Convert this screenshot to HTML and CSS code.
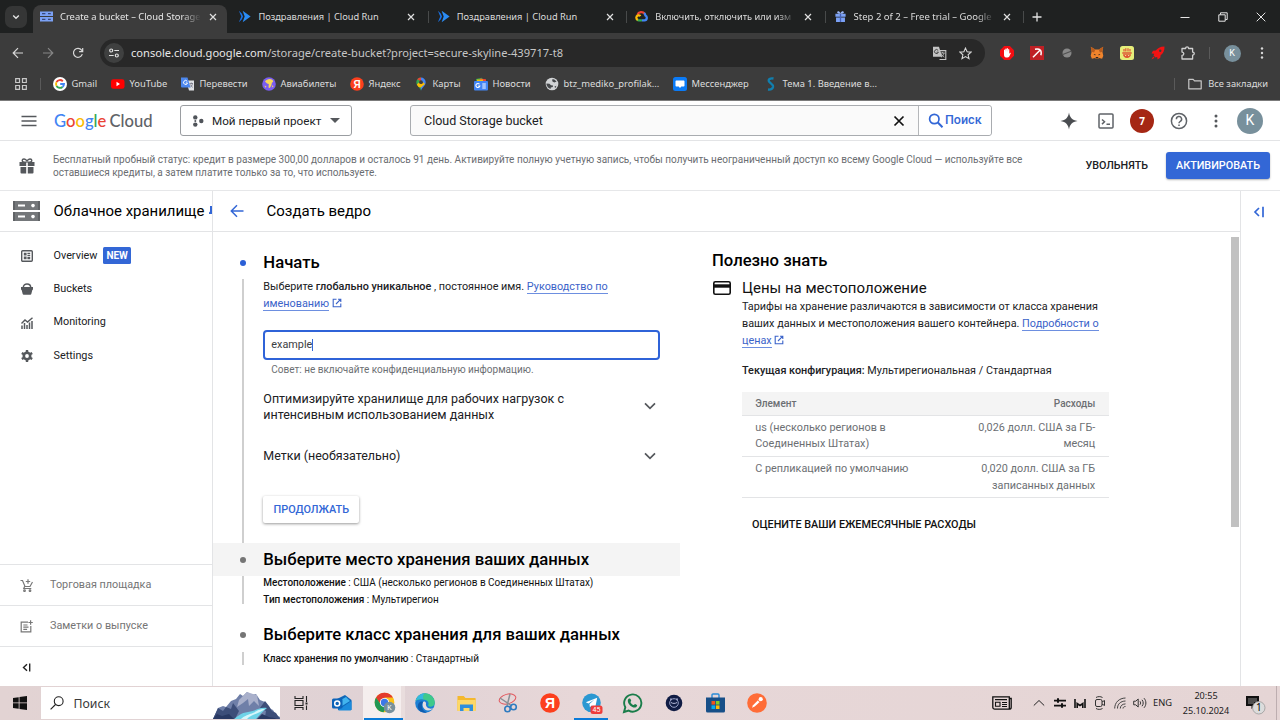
FILE: index.html
```html
<!DOCTYPE html>
<html lang="ru">
<head>
<meta charset="utf-8">
<title>Create a bucket – Cloud Storage</title>
<link rel="stylesheet" href="styles.css">
</head>
<body>
<header class="browser">
  <div class="tabstrip">
    <div class="tab-search"><svg width="8" height="8" viewBox="0 0 8 8"><path d="M1.2 2.4 4 5.2l2.8-2.8" fill="none" stroke="#e3e3e3" stroke-width="1.4"/></svg></div>
    <div class="tabs">
      <div class="tab active">
        <svg class="fav" viewBox="0 0 14 14"><path d="M0 1.6h14v4.8H0zM0 7.6h14v4.8H0z" fill="#7ba1f5"/><path d="M2.2 3.2h3.6v1.5H2.2zM8.6 3.2h3v1.5h-3zM2.2 9.3h3.6v1.5H2.2zM8.6 9.3h3v1.5h-3z" fill="#38477a"/></svg>
        <span class="tab-title fade">Create a bucket – Cloud Storage</span><span class="close"><svg viewBox="0 0 8 8"><path d="m1 1 6 6M7 1 1 7"/></svg></span>
      </div>
      <div class="tab sep">
        <svg class="fav" viewBox="0 0 14 14"><path d="m1 .8 2.5 6.2L1 13.2 4.2 10l1.2-3-1.2-3z" fill="#1a73e8"/><path d="m5 .8 8.6 6.2L5 13.2 7.2 7z" fill="#2b8cf5"/></svg>
        <span class="tab-title">Поздравления | Cloud Run</span><span class="close"><svg viewBox="0 0 8 8"><path d="m1 1 6 6M7 1 1 7"/></svg></span>
      </div>
      <div class="tab sep">
        <svg class="fav" viewBox="0 0 14 14"><path d="m1 .8 2.5 6.2L1 13.2 4.2 10l1.2-3-1.2-3z" fill="#1a73e8"/><path d="m5 .8 8.6 6.2L5 13.2 7.2 7z" fill="#2b8cf5"/></svg>
        <span class="tab-title">Поздравления | Cloud Run</span><span class="close"><svg viewBox="0 0 8 8"><path d="m1 1 6 6M7 1 1 7"/></svg></span>
      </div>
      <div class="tab sep">
        <svg class="fav" viewBox="0 0 14 14" fill="none" stroke-width="2.4"><path d="M2.6 5.2A4.6 4.6 0 0 1 10.4 4" stroke="#ea4335"/><path d="M9.800 3.400c1 .7 1.300 1.600 1.400 2.600 2.300 1 2 4.900-1 5.200H7.500" stroke="#4285f4"/><path d="M7.500 11.200H4.200c-.8 0-1.400-.2-1.900-.7" stroke="#34a853"/><path d="M3 10.800C.8 9.400.8 6.500 3.300 5.800c1-.2 2 .1 2.600.8" stroke="#fbbc05"/></svg>
        <span class="tab-title fade">Включить, отключить или изм</span><span class="close"><svg viewBox="0 0 8 8"><path d="m1 1 6 6M7 1 1 7"/></svg></span>
      </div>
      <div class="tab sep">
        <svg class="fav" viewBox="0 0 14 14"><path d="M1.500 4h11v3.200h-11zM2.200 8h9.600v5H2.200z" fill="#7ba1f5"/><path d="M7 4C4 4.500 3 3.200 3.500 2S6 1 7 3.500C8 1 10 1 10.500 2S10 4.500 7 4z" fill="#9db8f8"/><path d="M6.300 4h1.400v9H6.300z" fill="#4560b8"/></svg>
        <span class="tab-title fade">Step 2 of 2 – Free trial – Google</span><span class="close"><svg viewBox="0 0 8 8"><path d="m1 1 6 6M7 1 1 7"/></svg></span>
      </div>
    </div>
    <svg class="newtab" width="10" height="10" viewBox="0 0 10 10"><path d="M5 .5v9M.5 5h9" stroke="#e3e3e3" stroke-width="1.300"/></svg>
    <div class="winbtns">
      <svg viewBox="0 0 10 10"><path d="M.5 5.500h9"/></svg>
      <svg viewBox="0 0 10 10"><path d="M.8 2.800h6.400v6.400H.8zM2.500 2.600V.8h6.700v6.700H7.400"/></svg>
      <svg viewBox="0 0 10 10"><path d="m.7.7 8.600 8.600M9.300.7.7 9.300"/></svg>
    </div>
  </div>

  <div class="toolbar">
    <div class="nav">
      <svg width="12" height="12" viewBox="0 0 12 12"><path d="M11 6H1.500M6 1.200 1.200 6 6 10.800" fill="none" stroke="#d8d8d8" stroke-width="1.200"/></svg>
      <svg width="12" height="12" viewBox="0 0 12 12"><path d="M1 6h9.500M6 1.200 10.800 6 6 10.800" fill="none" stroke="#868686" stroke-width="1.200"/></svg>
      <svg width="12" height="12" viewBox="0 0 12 12"><path d="M10.300 7.200A4.500 4.500 0 1 1 9.600 3.200L10.500 4.500M10.700 1v3.600H7.100" fill="none" stroke="#d8d8d8" stroke-width="1.200"/></svg>
    </div>
    <div class="omnibox">
      <span class="site"><svg width="12" height="12" viewBox="0 0 12 12" fill="none" stroke="#e0e0e0" stroke-width="1.200"><circle cx="3.200" cy="3.500" r="1.500"/><path d="M6.300 3.500H11M1 8.500h4.700"/><circle cx="8.800" cy="8.500" r="1.500"/></svg></span>
      <span class="url"><b>console.cloud.google.com</b>/storage/create-bucket?project=secure-skyline-439717-t8</span>
      <svg class="translate" width="15" height="15" viewBox="0 0 15 15"><path d="M1 .8h6l3.200 10H1z" fill="#c4c4c4"/><path d="M6.200 4.600h7.600v8.900H7.500" fill="none" stroke="#c4c4c4" stroke-width="1.100"/><path d="M6.200 4.500a2 2 0 1 0 .2 1.700H4.600" fill="none" stroke="#3a3a3a" stroke-width=".9"/><path d="M8.500 7h4.300M10.600 6v1M12 7c-.3 2-1.700 3.400-3 4.200M9.300 8c.6 1.500 1.700 2.600 3 3.200" fill="none" stroke="#c4c4c4" stroke-width=".8"/></svg>
      <svg width="13" height="13" viewBox="0 0 13 13"><path d="m6.500 1.100 1.600 3.700 4 .3-3 2.700.9 3.900-3.500-2.100L3 11.700l.9-3.900-3-2.700 4-.3z" fill="none" stroke="#d8d8d8" stroke-width="1.100"/></svg>
    </div>
    <div class="ext">
      <span><svg width="14" height="14" viewBox="0 0 14 14"><path d="M4.200 0h5.600L14 4.200v5.600L9.800 14H4.200L0 9.800V4.200z" fill="#f40d12"/><path d="M4 7.500V4.200c0-.8 1-.8 1.100 0V6l.2-3c.1-.8 1.100-.8 1.200 0v2.800l.2-3.300c.1-.7 1.100-.7 1.200 0V6l.3-2.400c.1-.7 1.100-.6 1.100.1v4l.6-.8c.6-.5 1.100 0 .8.500L9.300 10.500C8.500 12 4 12.300 4 9z" fill="#fff"/></svg></span>
      <span><svg width="14" height="14" viewBox="0 0 14 14"><path d="M0 0h14v14H0z" fill="#bf2025"/><path d="M3 11.200 10.200 4M5 3.200c2.500-.5 5 .5 5.500 1s1.100 3 .3 5" fill="none" stroke="#fff" stroke-width="1.500"/></svg></span>
      <span><svg width="10" height="10" viewBox="0 0 10 10"><circle cx="5" cy="5" r="4.500" fill="#888"/><path d="m.8 6.500 8.300-3.300" stroke="#505050" stroke-width="1.200"/></svg></span>
      <span><svg width="14" height="14" viewBox="0 0 14 14"><path d="m.8.8 4.400 2.600h3.600L13.200.8l-.8 5 .9 4-1.200 3-3.100-.9-1.300 1.100H6.300L5 11.900l-3.100.9-1.200-3 .9-4z" fill="#f0842c"/><path d="m.8.8 4.400 2.600-1 3-2.600-.6zM13.200.8 8.800 3.400l1 3 2.600-.6z" fill="#b85c1e"/><path d="m3.500 8 2 .3-.3 1.200zM10.500 8l-2 .3.300 1.200zM5.600 11h2.800l-.5 1.500H6.100z" fill="#2b2522"/></svg></span>
      <span><svg width="14" height="14" viewBox="0 0 14 14"><rect width="14" height="14" rx="2.500" fill="#e6ee7a"/><path d="M2.300 6.200h9.400v1.500H2.300zM3 8.300h8c0 2-1.500 3.700-4 3.700s-4-1.700-4-3.700z" fill="#df5634"/><path d="M4 5.500V3M5.800 5.500V2.200M8 5.500V2.200M10 5.500V3" stroke="#df5634" stroke-width="1.200"/><path d="M5 9.500h1.200M8 9.500h1.200" stroke="#f4d29a"/></svg></span>
      <span><svg width="14" height="14" viewBox="0 0 14 14"><path d="M13.500.4C9 .5 6.500 2 4.800 4.400L2 4.700.5 7.500l2.700.3-.7 1.700 2 2 1.700-.6.400 2.600 2.700-1.700.3-2.600c2.600-1.800 4-4.500 3.900-8.800z" fill="#f31212"/><circle cx="9.200" cy="4.800" r="1.200" fill="#3c3c3c"/><path d="M2.200 10.500.5 13.500l3-1.700z" fill="#f31212"/></svg></span>
      <span><svg width="14" height="14" viewBox="0 0 14 14"><path d="M1 2.500h3.600c0-2.300 3-2.300 3 0h4v3.600c2.200 0 2.200 3 0 3V13H1V9.300c2.400 0 2.400-3.200 0-3.200z" fill="none" stroke="#d0d0d0" stroke-width="1.300" stroke-linejoin="round"/></svg></span>
    </div>
    <i class="tsep"></i>
    <span class="avatar small">K</span>
    <svg class="kebab" width="4" height="14" viewBox="0 0 4 14" fill="#d8d8d8"><circle cx="2" cy="2.500" r="1.200"/><circle cx="2" cy="7" r="1.200"/><circle cx="2" cy="11.500" r="1.200"/></svg>
  </div>

  <div class="bookmarks">
    <svg class="apps" width="12" height="12" viewBox="0 0 12 12" fill="none" stroke="#c8c8c8" stroke-width="1.200"><path d="M.7.7h3.800v3.800H.7zM7.500.7h3.800v3.800H7.500zM.7 7.500h3.800v3.800H.7zM7.500 7.500h3.800v3.800H7.500z"/></svg>
    <i class="tsep"></i>
    <div class="bm w58"><svg viewBox="0 0 14 14"><circle cx="7" cy="7" r="7" fill="#fff"/><g fill="none" stroke-width="1.900"><path d="M9.800 4.200A4 4 0 0 0 3.500 5.100" stroke="#ea4335"/><path d="M3.500 5.100a4 4 0 0 0 0 3.800" stroke="#fbbc05"/><path d="M3.500 8.900a4 4 0 0 0 6 1" stroke="#34a853"/><path d="M9.500 9.900A3.800 3.800 0 0 0 11 7H7.200" stroke="#4285f4"/></g></svg>Gmail</div>
    <div class="bm w70"><svg viewBox="0 0 14 14"><rect y="2.200" width="13.500" height="9.600" rx="2.300" fill="#f00"/><path d="M5.500 4.800v4.400L9 7z" fill="#fff"/></svg>YouTube</div>
    <div class="bm w81"><svg viewBox="0 0 14 14"><path d="M5 3.500h8v10H8z" fill="#dfe1e5"/><path d="M0 .5h6.500l3 10H1a1 1 0 0 1-1-1z" fill="#4c87ee"/><path d="M6.200 4.300a2 2 0 1 0 .3 1.700H4.800" fill="none" stroke="#fff"/><path d="M8.500 6.500H12M10.300 5.500v1M11.500 6.500c-.2 1.800-1.300 3-2.200 3.800M9.500 7.500c.5 1.400 1.200 2.200 2.300 2.900" fill="none" stroke="#667" stroke-width=".7"/></svg>Перевести</div>
    <div class="bm w88"><svg viewBox="0 0 14 14"><circle cx="7" cy="7" r="6.800" fill="#7a5df0"/><path d="M3 4.500c1.500-2.300 5-3.300 7.500-1.500 1.300 1.500.5 2.500-.5 2.500l-.7 3-1.500 2.500-1.300-.5L6.800 7 5 6.500z" fill="#f7d75a"/><path d="m2.500 8.500 2 1-1.200 1.300zM10.500 8l1 1.500-1.700 1z" fill="#f7d75a"/></svg>Авиабилеты</div>
    <div class="bm w64"><svg viewBox="0 0 14 14"><circle cx="7" cy="7" r="6.800" fill="#fc3f1d"/><text x="7" y="10.600" text-anchor="middle" class="ya">Я</text></svg>Яндекс</div>
    <div class="bm w60"><svg viewBox="0 0 14 14"><path d="M7 13.800C6.500 10.500 2.300 9 2.300 5.200A4.700 4.700 0 0 1 7 .5z" fill="#34a853"/><path d="M7 13.800c.5-3.300 4.700-4.800 4.700-8.600A4.700 4.700 0 0 0 7 .5z" fill="#4285f4"/><path d="M3.200 2.300A4.700 4.700 0 0 1 7 .5v4z" fill="#ea4335"/><path d="M2.800 7.500 7 3.500 11 7 7 10.500 4.500 10z" fill="#fbbc05"/><circle cx="7" cy="5.200" r="1.900" fill="#3c3c3c"/></svg>Карты</div>
    <div class="bm w71"><svg viewBox="0 0 14 14"><path d="M2 2 8 .8l1 3H2z" fill="#34a853"/><path d="m6 1.500 6 .8v3H6z" fill="#ea4335"/><path d="M3 2.500h6v3H3z" fill="#fbbc05"/><rect y="4" width="14" height="9.500" rx="1" fill="#4285f4"/><path d="M5.500 7.300a2 2 0 1 0 .3 1.700H4.300M8.300 7h3.500M8.300 9h3.500M8.300 11h3.500" fill="none" stroke="#fff" stroke-width="1.100"/></svg>Новости</div>
    <div class="bm w128"><svg viewBox="0 0 14 14"><circle cx="7" cy="7" r="6.300" fill="#d2d4d6"/><path d="M7 2.500 9 2.300l2.600 2.300-2.300 1L7.500 4.500zM1.500 6.500l3 .2 1.500 1.500 2 .3-.2 1.500-2 .6-.3 1.500L3 10.500 1.500 8zM9.500 9.500l2-.8-1.300 2.500z" fill="#45484b"/></svg>btz_mediko_profilak...</div>
    <div class="bm w91"><svg viewBox="0 0 14 14"><rect width="14" height="14" rx="2.500" fill="#0b7bf7"/><path d="M3.500 3.500h7c.6 0 1 .4 1 1v4c0 .6-.4 1-1 1H8.300L7 11 5.700 9.500H3.500c-.6 0-1-.4-1-1v-4c0-.6.400-1 1-1z" fill="#fff"/></svg>Мессенджер</div>
    <div class="bm last"><svg viewBox="0 0 14 14"><path d="M9.500 1.500C6 .8 4 2.500 5 4.500s4.500 2.500 4 5.500c-.3 1.500-2 2.800-5 2.500" fill="none" stroke="#117fae" stroke-width="2.300"/></svg>Тема 1. Введение в...</div>
    <i class="tsep"></i>
    <div class="bm allbm"><svg viewBox="0 0 14 14"><path d="M.8 2.300h4.400l1.300 1.500h6.700v8H.8z" fill="none" stroke="#c8c8c8" stroke-width="1.200" stroke-linejoin="round"/></svg>Все закладки</div>
  </div>
</header>

<div class="gbar">
  <svg class="burger" width="16" height="12" viewBox="0 0 16 12"><path d="M.5 1.500h15M.5 6h15M.5 10.500h15" stroke="#55585c" stroke-width="1.500"/></svg>
  <div class="logo"><span class="b">G</span><span class="r">o</span><span class="y">o</span><span class="b">g</span><span class="g">l</span><span class="r">e</span> <span class="cl">Cloud</span></div>
  <div class="project"><svg width="12" height="12" viewBox="0 0 12 12" fill="#50545a"><circle cx="3.300" cy="2.400" r="2.200"/><circle cx="9.300" cy="6" r="2.200"/><circle cx="3.300" cy="9.600" r="2.200"/><circle cx="3.300" cy="6" r="1"/></svg><span>Мой первый проект</span><i class="caret"></i></div>
  <div class="search"><span class="q">Cloud Storage bucket</span><svg width="12" height="12" viewBox="0 0 12 12"><path d="m1.500 1.500 9 9M10.500 1.500l-9 9" stroke="#111" stroke-width="1.700"/></svg><div class="go"><svg width="16" height="16" viewBox="0 0 16 16" fill="none" stroke="#3367d6"><circle cx="6.300" cy="6" r="4.700" stroke-width="1.700"/><path d="m9.800 9.500 4.700 4.700" stroke-width="2"/></svg>Поиск</div></div>
  <div class="gicons">
    <span><svg width="18" height="18" viewBox="0 0 18 18"><path d="M9 .5c.8 5 3 7.500 8.500 8.500C12 10 9.800 12.500 9 17.500 8.200 12.500 6 10 .5 9 6 8 8.200 5.500 9 .5z" fill="#4a4d51"/></svg></span>
    <span><svg width="16" height="16" viewBox="0 0 16 16" fill="none" stroke="#5f6368" stroke-width="1.500"><rect x="1" y="1" width="14" height="14" rx="1"/><path d="m4 6.500 2.500 2.300L4 11.100M8.500 11.200h3.500"/></svg></span>
    <span><b class="count">7</b></span>
    <span><svg width="18" height="18" viewBox="0 0 18 18" fill="none" stroke="#5f6368" stroke-width="1.500"><circle cx="9" cy="9" r="7.600"/><path d="M6.400 7.200a2.600 2.600 0 1 1 3.900 2.200C9.300 10 9 10.300 9 11.300M9 12.400v1.600"/></svg></span>
    <span><svg width="4" height="16" viewBox="0 0 4 16" fill="#55585c"><circle cx="2" cy="3" r="1.500"/><circle cx="2" cy="8" r="1.500"/><circle cx="2" cy="13" r="1.500"/></svg></span>
  </div>
  <span class="avatar big">K</span>
</div>

<div class="banner">
  <svg width="16" height="16" viewBox="0 0 16 16" fill="#55585c"><path d="M.5 4h6.700v4H.5zM8.800 4h6.700v4H8.800zM1.500 9h5.700v6.500H2.500a1 1 0 0 1-1-1zM8.800 9h5.700v5.500a1 1 0 0 1-1 1H8.800z"/><path d="M7.500 4.200C5 4.500 3 4 3.200 2.300S6.500.3 8 3C9.500.3 12.600.6 12.800 2.300S11 4.500 8.500 4.200" fill="none" stroke="#55585c" stroke-width="1.400"/></svg>
  <p>Бесплатный пробный статус: кредит в размере 300,00 долларов и осталось 91 день. Активируйте полную учетную запись, чтобы получить неограниченный доступ ко всему Google Cloud — используйте все<br>оставшиеся кредиты, а затем платите только за то, что используете.</p>
  <a class="dismiss">УВОЛЬНЯТЬ</a>
  <a class="activate">АКТИВИРОВАТЬ</a>
</div>

<div class="console">
  <aside class="side">
    <div class="side-head"><svg width="27" height="20" viewBox="0 0 27 20"><path d="M0 0h27v9H0zM0 11h27v9H0z" fill="#74777a"/><path d="M5 3.600h7v2H5zM5 14.600h7v2H5z" fill="#fff"/><circle cx="20" cy="4.600" r="1.800" fill="#fff"/><circle cx="20" cy="15.600" r="1.800" fill="#fff"/><path d="M0 0h2v9H0zM25 0h2v9h-2zM0 11h2v9H0zM25 11h2v9h-2z" fill="#606366"/></svg><span>Облачное хранилище</span><svg class="pin" width="3" height="10" viewBox="0 0 3 10"><path d="M1 0h2v8H0V6.500l1-1z" fill="#3367d6"/></svg></div>
    <nav>
      <a><svg width="12" height="12" viewBox="0 0 12 12"><rect x=".7" y=".7" width="10.600" height="10.600" rx="1" fill="none" stroke="#55585c" stroke-width="1.400"/><path d="M2.800 2.800h2.800v2.800H2.800zM2.800 6.400h2.800v2.800H2.800zM6.400 2.800h2.800v1.400H6.400zM6.400 5h2.800v1.300H6.400zM6.400 7.100h2.800v2.100H6.400z" fill="#55585c"/></svg>Overview<b class="new">NEW</b></a>
      <a><svg width="12" height="12" viewBox="0 0 12 12"><path d="M0 4h12v2.800h-.6L10.300 11a1 1 0 0 1-1 .8H2.700a1 1 0 0 1-1-.8L.6 6.800H0z" fill="#55585c"/><path d="M2.300 4.500C2.300-.3 9.700-.3 9.700 4.500" fill="none" stroke="#55585c" stroke-width="1.500"/></svg>Buckets</a>
      <a><svg width="12" height="12" viewBox="0 0 12 12"><path d="M.5 6.500 4 3l2.500 2L11.500.7" fill="none" stroke="#55585c" stroke-width="1.400"/><path d="M1 12V8.500M3.500 12V6M6 12V8M8.500 12V5.500M11 12V4" stroke="#55585c" stroke-width="1.500"/></svg>Monitoring</a>
      <a><svg width="12" height="12" viewBox="0 0 12 12"><circle cx="6" cy="6" r="3.200" fill="none" stroke="#55585c" stroke-width="2.600"/><path d="M6 0v12M.8 3l10.400 6M11.200 3.000.8 9" stroke="#55585c" stroke-width="2.400"/><circle cx="6" cy="6" r="1.900" fill="#fff"/></svg>Settings</a>
    </nav>
    <div class="side-foot">
      <a><svg width="13" height="13" viewBox="0 0 13 13" fill="none" stroke="#777" stroke-width="1.200"><path d="M.5 1.500h2L5 7.500h5l2.500-4.500M4.600 7.500 3.800 9.500h7.500M8 .3v4.400M5.800 2.500h4.400"/><circle cx="4.500" cy="11.700" r=".8"/><circle cx="10" cy="11.700" r=".8"/></svg>Торговая площадка</a>
      <a><svg width="13" height="13" viewBox="0 0 13 13" fill="none" stroke="#777" stroke-width="1.200"><path d="M8 2.200H1.200v9.600h9.600V6M3.300 5h4.200M3.300 7.200h5.200M3.300 9.400h3.800M10.600.3v4.400M8.400 2.500h4.400"/></svg>Заметки о выпуске</a>
      <a class="collapse"><svg width="9" height="9" viewBox="0 0 9 9" fill="none" stroke="#222" stroke-width="1.400"><path d="M5 1.200 1.500 4.500 5 7.800M7.700.5v8"/></svg></a>
    </div>
  </aside>

  <main>
    <div class="main-head"><svg width="14" height="14" viewBox="0 0 14 14"><path d="M13.500 7H1.500M7 1.300 1.300 7 7 12.700" fill="none" stroke="#3367d6" stroke-width="1.500"/></svg>Создать ведро</div>
    <div class="cols">
      <div class="steps">
        <section class="step">
          <div class="dot on"></div><h2>Начать</h2>
          <div class="rail"></div>
          <div class="body first">
            <p class="lead">Выберите <b>глобально уникальное</b> , постоянное имя. <a class="lnk">Руководство по</a><br><a class="lnk">именованию</a> <svg class="out" viewBox="0 0 10 10"><path d="M4.500 1.200H1.200v7.600h7.600V5.500M6 1.200h2.800V4M8.800 1.200 4 6"/></svg></p>
            <div class="input">example<i></i></div>
            <p class="hint">Совет: не включайте конфиденциальную информацию.</p>
            <div class="exp optim"><span>Оптимизируйте хранилище для рабочих нагрузок с<br>интенсивным использованием данных</span><svg width="12" height="8" viewBox="0 0 12 8"><path d="m1 1.300 5 5 5-5"/></svg></div>
            <div class="exp labels"><span>Метки (необязательно)</span><svg width="12" height="8" viewBox="0 0 12 8"><path d="m1 1.300 5 5 5-5"/></svg></div>
            <a class="cont">ПРОДОЛЖАТЬ</a>
          </div>
        </section>
        <section class="step hl">
          <div class="dot"></div><h2>Выберите место хранения ваших данных</h2>
          <div class="rail"></div>
          <div class="body sum"><b>Местоположение</b> : США (несколько регионов в Соединенных Штатах)<br><b>Тип местоположения</b> : Мультирегион</div>
        </section>
        <section class="step third">
          <div class="dot"></div><h2>Выберите класс хранения для ваших данных</h2>
          <div class="rail"></div>
          <div class="body sum short"><b>Класс хранения по умолчанию</b> : Стандартный</div>
        </section>
      </div>
      <div class="know">
        <h2>Полезно знать</h2>
        <div class="price">
          <svg width="18" height="14" viewBox="0 0 18 14"><rect x=".8" y=".8" width="16.400" height="12.400" rx="1.500" fill="none" stroke="#111" stroke-width="1.600"/><path d="M1 3.300h16v3.400H1z" fill="#111"/></svg>
          <div class="info">
            <h3>Цены на местоположение</h3>
            <p>Тарифы на хранение различаются в зависимости от класса хранения<br>ваших данных и местоположения вашего контейнера. <a class="lnk">Подробности о</a><br><a class="lnk">ценах</a> <svg class="out" viewBox="0 0 10 10"><path d="M4.500 1.200H1.200v7.600h7.600V5.500M6 1.200h2.800V4M8.800 1.200 4 6"/></svg></p>
            <p class="cfg"><b>Текущая конфигурация:</b> Мультирегиональная / Стандартная</p>
            <div class="tbl">
              <div class="row th"><span>Элемент</span><span>Расходы</span></div>
              <div class="row"><span>us (несколько регионов в<br>Соединенных Штатах)</span><span>0,026 долл. США за ГБ-<br>месяц</span></div>
              <div class="row"><span>С репликацией по умолчанию</span><span>0,020 долл. США за ГБ<br>записанных данных</span></div>
            </div>
            <a class="est">ОЦЕНИТЕ ВАШИ ЕЖЕМЕСЯЧНЫЕ РАСХОДЫ</a>
          </div>
        </div>
      </div>
      <div class="scroll"></div>
    </div>
  </main>
  <aside class="right"><svg width="12" height="12" viewBox="0 0 12 12" fill="none" stroke="#3367d6" stroke-width="1.700"><path d="M6 2 2 6l4 4M10 .8v10.400"/></svg></aside>
</div>

<footer class="taskbar">
  <div class="start"><svg width="14" height="14" viewBox="0 0 14 14" fill="#111"><path d="M0 2 5.700 1.200v5.300H0zM6.500 1.100 14 0v6.500H6.500zM0 7.300h5.700v5.400L0 11.900zM6.500 7.300H14V14l-7.500-1.100z"/></svg></div>
  <div class="tsearch"><svg width="14" height="14" viewBox="0 0 14 14" fill="none" stroke="#222" stroke-width="1.100"><circle cx="8.700" cy="5.200" r="4.400"/><path d="M5.500 8.500.6 13.400"/></svg><span>Поиск</span>
    <svg class="mount" width="67" height="28" viewBox="0 0 67 28"><path d="M0 28 5 17l5-2 3 1 5-6 5-2 4-5 3 2 4-4 5 3 4-1 4 6 5 2 4 6 4 2 3 5 4 2v2z" fill="#6f7fa8"/><path d="m34 1-8 8-2 7 6-4 5-4 1 7 5-5 5 5-2-11-4-1z" fill="#a9b0cb"/><path d="m5 17-5 11h22l4-8-6-8-2 6-5-2-3 4zM52 10l-5 7 6 3-1 6 15 2-4-6-4-2-3-5z" fill="#3d4e79"/><path d="M54 17c-9-1-10 3-19 4-7 1-10 4-14 7h22c5-5 7-8 11-11z" fill="#6fd3e8"/><path d="M52 18c-8 0-8 3-15 5-5 2-7 3-9 5h6c4-5 12-5 18-10z" fill="#d6f6fb"/><path d="m0 28 4-5 5 2 7-2 5 5zM44 28l5-5 7 3 11 2z" fill="#293963"/></svg>
  </div>
  <div class="apps-row">
    <span><svg width="16" height="16" viewBox="0 0 16 16" fill="none" stroke="#222" stroke-width="1.100"><path d="M2 1v2.500h8V1M2 15v-2.500h8V15M2 5.500h8v5H2zM13.500 1v6M13.500 10.500V15"/><path d="M12.500 7.500h2v2h-2z" fill="#222" stroke="none"/></svg></span>
    <span><svg width="20" height="18" viewBox="0 0 20 18"><path d="m5 5 8-4 6.500 5v10H6z" fill="#1068b8"/><path d="m7 7 7-4 4 4-8 5z" fill="#42b4ee"/><path d="m6 16 13.500-9v8c0 1-1 1.500-1.500 1.500H7z" fill="#1b8bdc"/><rect y="4.500" width="10.500" height="10" rx="1.500" fill="#0d63b8"/><circle cx="5.200" cy="9.500" r="2.500" fill="none" stroke="#fff" stroke-width="1.500"/></svg></span>
    <span class="cur"><svg width="22" height="22" viewBox="0 0 22 22"><circle cx="10.500" cy="10.500" r="9.800" fill="#fbc116"/><path d="M2 5.600a9.800 9.800 0 0 1 17 0h-8.500l-4 7z" fill="#e33b2e"/><path d="M2 5.600a9.800 9.800 0 0 0 7.500 14.700l4-7.300-7-1z" fill="#219653"/><circle cx="10.500" cy="10.500" r="4.600" fill="#fff"/><circle cx="10.500" cy="10.500" r="3.700" fill="#3b78e7"/><circle cx="15.500" cy="15.500" r="5.800" fill="#78909c"/><text x="15.500" y="18" text-anchor="middle" class="kk">K</text></svg></span>
    <span><svg width="20" height="20" viewBox="0 0 20 20"><circle cx="10" cy="10" r="9.800" fill="#1c7fd4"/><path d="M.5 8A9.800 9.800 0 0 1 19.800 9c.2 3-1.500 4.500-4 4.700-2 .1-3-.6-2.500-1.700C14.500 9 12 7 8.500 6.500 5 6 2 7 .5 8z" fill="#3fc98a"/><path d="M.5 8C2 3 6 .3 10 .3c-3 1.700-1.500 6.200-1.500 6.200C5 5.500 2 6.500.5 8z" fill="#36b7e0"/><path d="M8 9c-1.500 4 1 8.500 5 8.500 2.500 0 4-1 5.300-2.500-2.300 1.500-8.300.5-7.300-5-.3-1.500-2-2-3-1z" fill="#e7dcdf"/><path d="M8 9c-2.500 4-.5 9.500 4 10.500C5 21 1 15 3.500 10.500 5 8.500 7 8 8 9z" fill="#0f5cae"/></svg></span>
    <span><svg width="19" height="17" viewBox="0 0 19 17"><path d="M.5 1h6.200l1.800 2H18a.7.700 0 0 1 .7.700V15a1 1 0 0 1-1 1H1.300a1 1 0 0 1-1-1z" fill="#f4b82e"/><path d="M.3 5h18.400v10a1 1 0 0 1-1 1H1.300a1 1 0 0 1-1-1z" fill="#fdd868"/><path d="M3 9.500h13V16h-3.500v-3h-6v3H3z" fill="#2f8fdc"/></svg></span>
    <span><svg width="20" height="20" viewBox="0 0 20 20" fill="none"><ellipse cx="9.500" cy="6" rx="8.500" ry="4.800" transform="rotate(-15 9.500 6)" stroke="#e2565c" stroke-width="1"/><path d="m2 5 12 8M12 1l-3 12" stroke="#8a8f95" stroke-width="1.500"/><circle cx="15.500" cy="14" r="2.800" stroke="#2f7bc0" stroke-width="1.600"/><circle cx="9.500" cy="16" r="2.700" stroke="#2f7bc0" stroke-width="1.600"/></svg></span>
    <span><svg width="20" height="20" viewBox="0 0 20 20"><circle cx="10" cy="10" r="9.800" fill="#fc3f1d"/><text x="10" y="15.200" text-anchor="middle" class="ya2">Я</text></svg></span>
    <span class="run"><svg width="21" height="21" viewBox="0 0 21 21"><circle cx="9.500" cy="9.800" r="9.300" fill="#2b98d2"/><path d="m3.800 9.300 11.400-4.500-2 10-3.500-2.400-1.800 1.800-.4-3.200 5-4.400-6 3.800z" fill="#fff"/><rect x="8.500" y="12.500" width="12" height="8.500" rx="2.500" fill="#ee3c3c"/><text x="14.500" y="19.300" text-anchor="middle" class="badge45">45</text></svg></span>
    <span><svg width="21" height="21" viewBox="0 0 21 21"><path d="m2 19 1.300-4.700A8.600 8.600 0 1 1 6.700 17.600z" fill="none" stroke="#1a7d4a" stroke-width="1.900"/><path d="M7.200 5.600c.6-.4 1.100-.2 1.300.4l.7 1.600c.1.500-.9 1.300-.7 1.600.7 1.400 1.700 2.300 3.200 2.900.3 0 1-1.200 1.400-1.100l1.900 1c.6.400-.3 2.400-2 2.600-3.200.2-7.300-3.600-7.200-6.900 0-.9.700-1.800 1.400-2.100z" fill="#1a7d4a"/></svg></span>
    <span><svg width="18" height="18" viewBox="0 0 18 18"><circle cx="9" cy="9" r="8.300" fill="#101c44"/><circle cx="9" cy="9" r="4.300" fill="none" stroke="#9aa3c9"/><circle cx="6" cy="5.200" r="1" fill="#9aa3c9"/><circle cx="12" cy="5.200" r="1" fill="#9aa3c9"/><path d="M6 8.500c1.500 1.200 4.500 1.200 6 0" fill="none" stroke="#b7bddc"/></svg></span>
    <span><svg width="19" height="20" viewBox="0 0 19 20"><path d="M6 5V2a1 1 0 0 1 1-1h5a1 1 0 0 1 1 1v3" fill="none" stroke="#2a8cd8" stroke-width="1.400"/><path d="M0 4.500h19V18a1.500 1.500 0 0 1-1.500 1.500h-16A1.500 1.500 0 0 1 0 18z" fill="#174f88"/><path d="M5.500 8h3.600v3.600H5.500z" fill="#f1511b"/><path d="M9.900 8h3.600v3.600H9.900z" fill="#80cc28"/><path d="M5.500 12.400h3.600V16H5.500z" fill="#00adef"/><path d="M9.900 12.400h3.600V16H9.900z" fill="#fbbc09"/></svg></span>
    <span><svg width="20" height="20" viewBox="0 0 20 20"><circle cx="10" cy="10" r="9.800" fill="#ff6c37"/><path d="m5 14.700 1-2.400 5-5 1.700 1.600-5 4.700z" fill="#fff"/><circle cx="13.700" cy="6.200" r="2.100" fill="#fff"/><path d="m11 7.300 1.700 1.600" stroke="#ff6c37" stroke-width=".7"/></svg></span>
  </div>
  <div class="tray">
    <svg class="news" width="20" height="14" viewBox="0 0 20 14" fill="none" stroke="#111" stroke-width="1.300"><path d="M.8.800h16.500v12.400H2.800a2 2 0 0 1-2-2zM17.300 2.500h1.900v8.700a2 2 0 0 1-2 2M3 3.600h12"/><path d="M3.500 6.300h4.500v4H3.500zM10 6.500h5M10 8.500h5M10 10.500h5" stroke-width="1.100"/></svg>
    <span><svg width="12" height="8" viewBox="0 0 12 8"><path d="m.8 6.500 5.200-5 5.200 5" fill="none" stroke="#222"/></svg></span>
    <span><svg width="12" height="12" viewBox="0 0 12 12" fill="#111"><path d="M0 2.700h3V1.300h2v1.400h7v1.700H5v1.400H3V4.400H0zM0 7.700h7V6.300h2v1.400h3v1.700H9v1.400H7V9.400H0z"/></svg></span>
    <span><svg width="12" height="11" viewBox="0 0 12 11"><path d="M1 1v9M11 1v9M3.200 10V5.500L6 7.500l2.800-2V10" fill="none" stroke="#111" stroke-width="1.600"/></svg></span>
    <span><svg width="12" height="14" viewBox="0 0 12 14" fill="none" stroke="#333"><rect x="1.500" y="3.500" width="6.500" height="7" rx="1.500"/><path d="m8 6 2.500-1.500v5L8 8M2 1.500C4 .3 6.500.3 8.500 1.500M2 12.500c2 1.200 4.500 1.200 6.500 0"/></svg></span>
    <span><svg width="12" height="12" viewBox="0 0 12 12" fill="none" stroke="#444"><path d="M.7 11.500C.7 5.500 5 1.200 11.500 1M3.500 11.500c0-4.500 3-7.300 8-7.500M6.300 11.500c0-2.700 2-4.500 5.200-4.600M9 11.500c0-1.200 1-2 2.500-2"/></svg></span>
    <span><svg width="14" height="12" viewBox="0 0 14 12" fill="none" stroke="#333"><path d="M.7 4.200h2L5.200 2v8L2.700 7.800h-2zM7 4.300c.8 1 .8 2.400 0 3.400M9 2.800c1.600 1.800 1.600 4.600 0 6.400M11 1.200c2.500 2.700 2.500 6.900 0 9.600"/></svg></span>
    <em class="lang">ENG</em>
    <div class="clock">20:55<br>25.10.2024</div>
    <div class="note"><svg width="20" height="20" viewBox="0 0 20 20"><path d="M0 1h13v10H8.500L5.500 14v-3H0z" fill="#111"/><path d="M2 4h9M2 6h9M2 8h6" stroke="#ddd" stroke-width=".6"/><circle cx="12.800" cy="12.800" r="6.200" fill="#dcdcdc" stroke="#999" stroke-width=".8"/><text x="12.800" y="16.300" text-anchor="middle" class="notecount">1</text></svg></div>
    <i class="desk"></i>
  </div>
</footer>
</body>
</html>
```
FILE: styles.css
```css
*{box-sizing:border-box}
body{margin:0;width:1280px;height:720px;overflow:hidden;display:flex;flex-direction:column;background:#fff;color:#202124;font:10.83px/16.67px Roboto,"Liberation Sans",sans-serif}
h2,h3,p{margin:0;font-weight:400}
b{font-weight:500}
svg{display:block;flex:none}

/* browser chrome */
.browser{height:101px;flex:none;background:#3c3c3c;border-bottom:1px solid #7b7b7b;color:#dcdcdc;font-family:"Noto Sans","Open Sans",sans-serif}
.tabstrip{height:33px;background:#1f2121;display:flex;align-items:center}
.tab-search{width:22px;height:22px;margin:0 6px 0 5px;border-radius:7px;background:#353636;display:flex;align-items:center;justify-content:center}
.tabs{display:flex;height:33px}
.tab{position:relative;width:198.4px;height:33px;padding-left:7px;display:flex;align-items:center;font-size:9.25px}
.tab.active::before{content:"";position:absolute;z-index:0;left:0;top:5px;width:194px;height:28px;border-radius:8px 8px 0 0;background:#3c3c3c}
.tab.active{color:#e6e6e6;font-size:9.4px}
.tab>*{position:relative}
.tab.sep::after{content:"";position:absolute;right:1px;top:11px;width:1px;height:12px;background:#484a4a}
.tab.sep:last-child{font-size:9.5px}
.fav{width:13px;height:13px}
.tab-title{margin:1px 0 0 7px;width:146px;white-space:nowrap;overflow:hidden}
.tab-title.fade{-webkit-mask-image:linear-gradient(90deg,#000 122px,transparent 141px);mask-image:linear-gradient(90deg,#000 122px,transparent 141px)}
.close{width:8px;margin-left:3px}
.close svg{width:8px;height:8px;stroke:#e0e0e0;stroke-width:1.2}
.newtab{margin-left:7px}
.winbtns{margin-left:auto;display:flex;gap:28px;padding-right:14px}
.winbtns svg{width:10px;height:10px;fill:none;stroke:#e6e6e6;stroke-width:1}
.toolbar{height:40px;display:flex;align-items:center}
.nav{display:flex;gap:18px;padding:0 16px 0 12px}
.omnibox{width:885px;height:28px;border-radius:14px;background:#282828;display:flex;align-items:center;padding:0 13px 0 4px}
.site{width:20px;height:20px;border-radius:50%;background:#3f4040;display:flex;align-items:center;justify-content:center}
.url{margin-left:7px;font-size:11.1px;white-space:nowrap;color:#c6c6c6}
.url b{font-weight:400;color:#e8e8e8}
.translate{margin:0 12px 0 auto}
.ext{display:flex;align-items:center;margin-left:7px}
.ext span{width:30.1px;display:flex;justify-content:center}
.tsep{width:1px;height:12px;background:#5a5a5a;flex:none}
.toolbar .tsep{margin-left:6px}
.avatar{border-radius:50%;background:#78909c;color:#fff;display:flex;align-items:center;justify-content:center;flex:none}
.small{width:17px;height:17px;margin-left:14px;font:9px Roboto,sans-serif}
.kebab{margin-left:19px}
.bookmarks{height:22px;display:flex;align-items:center;font-size:9.4px}
.apps{margin:0 13px 0 15px}
.apps+.tsep{margin-right:12px}
.bm{display:flex;align-items:center;gap:4.500px;white-space:nowrap;flex:none}
.bm svg{width:14px;height:14px}
.w58{width:58px}.w70{width:70px}.w81{width:81px}.w88{width:88px}.w64{width:64px}.w60{width:60px}.w71{width:71px}.w128{width:128px}.w91{width:91px}
.last{margin-right:auto}
.allbm{margin:0 12px 0 13px;gap:6px;font-size:9.3px}
.ya{font:700 10px "Liberation Sans",sans-serif;fill:#fff}

/* console top bar */
.gbar{height:40px;flex:none;border-bottom:1px solid #e3e4e6;display:flex;align-items:center;padding-left:20.500px}
.logo{width:126px;padding-left:17.500px;font:16.6px/24px Lato,sans-serif;white-space:nowrap}
.logo .b{color:#4285f4}.logo .r{color:#ea4335}.logo .y{color:#fbbc05}.logo .g{color:#34a853}.logo .cl{color:#5f6368;margin-left:-1px}
.logo span{font-weight:500}
.project{width:172px;height:31px;margin-left:17.500px;border:1px solid #9a9da1;border-radius:3px;display:flex;align-items:center;padding-left:11px;font-size:11.68px;white-space:nowrap}
.project span{margin:1px 9px 0 8px}
.caret{border:5px solid transparent;border-top-color:#55585c;border-bottom:0}
.search{width:582px;height:31px;margin-left:58px;border:1px solid #a9acb0;border-radius:3px;background:#fafafa;display:flex;align-items:center;padding-left:13px}
.q{font-size:12.5px;margin:1px auto 0 0}
.go{width:73px;height:29px;margin-left:13px;border-left:1px solid #b5b7ba;background:#fff;border-radius:0 3px 3px 0;display:flex;align-items:center;padding-left:9px;gap:1px;color:#3367d6;font-size:12.5px;font-weight:500}
.gicons{display:flex;margin-left:58.500px}
.gicons span{width:36.7px;height:24px;display:flex;align-items:center;justify-content:center}
.count{width:24px;height:24px;flex:none;border-radius:50%;background:#a52714;color:#fff;font:700 10px/24px "Open Sans",sans-serif;text-align:center}
.big{width:26px;height:26px;margin-left:3px;font-size:14px}

.banner{height:50px;flex:none;border-bottom:1px solid #e6e7e9;display:flex;align-items:center;padding:0 10px 0 18.500px}
.banner p{margin:1px 63px 0 18.500px;font-size:10px;line-height:13.3px;color:#6a6d71;white-space:nowrap}
.dismiss{margin-top:1px;font-size:10.75px;font-weight:500;color:#202124}
.activate{margin-left:auto;width:104px;height:27px;border-radius:3px;background:#3367d6;color:#fff;font-weight:500;text-align:center;line-height:27px;box-shadow:0 1px 2px rgba(0,0,0,.3)}

/* console body */
.console{flex:1;min-height:0;display:flex}
.side{width:213px;border-right:1px solid #e3e4e6;display:flex;flex-direction:column}
.side-head{height:41px;flex:none;border-bottom:1px solid #e3e4e6;display:flex;align-items:center;padding-left:13px;font-size:14.95px;color:#000;overflow:hidden;white-space:nowrap}
.side-head span{margin:0 5px 0 13.500px}
.side nav{padding-top:7.300px}
.side nav a{height:33.4px;display:flex;align-items:center;padding-left:21px}
.side nav svg{margin-right:20.500px}
.new{margin-left:6px;height:17px;padding:0 3px;border-radius:1.500px;background:#3367d6;color:#fff;font:700 10px/17px Roboto,sans-serif}
.side-foot{margin-top:auto;color:#757575}
.side-foot a{height:40.800px;border-top:1px solid #e3e4e6;display:flex;align-items:center;padding:1px 0 0 20px}
.side-foot svg{margin-right:17px}
.side-foot .collapse{padding-left:22px;height:40px}
main{flex:1;min-width:0;display:flex;flex-direction:column}
.main-head{height:41px;flex:none;border-bottom:1px solid #e3e4e6;display:flex;align-items:center;gap:22.500px;padding-left:17px;font-size:14.98px;color:#000}
.cols{flex:1;min-height:0;display:flex;overflow:hidden}
.steps{width:467px;padding-top:14px}
.step{display:grid;grid-template-columns:50.300px 1fr;grid-template-rows:33px auto}
.step h2{font-size:16.7px;font-weight:500;line-height:33px;color:#000;white-space:nowrap}
.dot{align-self:center;margin-left:27px;width:6px;height:6px;border-radius:50%;background:#757575}
.dot.on{background:#2a5fd6}
.rail{margin-left:29px;width:2px;background:#cfcfcf}
.hl{background:linear-gradient(#f4f4f4,#f4f4f4) 0 0/100% 33px no-repeat;margin-bottom:14px}
.third{grid-template-rows:34px auto}
.first{height:264px;padding-right:20.500px}
.lead{white-space:nowrap}
.lnk{color:#3b63c9;border-bottom:1px solid #6d8fe0;display:inline-block;line-height:13px}
.out{display:inline-block;width:10px;height:10px;vertical-align:-1px;fill:none;stroke:#3b63c9;stroke-width:1.100}
.input{margin-top:18px;height:30px;border:2px solid #2f63d8;border-radius:4px;padding:0 6px;display:flex;align-items:center;color:#3c4043}
.input i{width:1px;height:12px;background:#3367d6}
.hint{margin:3px 0 0 8px;font-size:10px;line-height:13px;color:#6c6f73}
.exp{display:flex;align-items:center;justify-content:space-between;font-size:12.48px;white-space:nowrap}
.exp svg{margin-right:4px;fill:none;stroke:#55585c;stroke-width:1.700}
.exp.optim{height:34px;margin-top:14px}
.exp.optim svg{margin-bottom:2px}
.exp.labels{height:34px;margin-top:15px}
.cont{display:block;width:96px;height:27px;margin-top:23px;border-radius:2px;background:#fff;color:#3367d6;font-size:10.9px;font-weight:500;line-height:27px;text-align:center;box-shadow:0 1px 3px rgba(0,0,0,.4)}
.sum{font-size:10px;height:29px;line-height:16.6px;margin-top:-1px;color:#111;white-space:nowrap}
.sum.short{height:14px}
.know{padding:18px 0 0 32px;width:430px}
.know h2{font-size:16.65px;font-weight:500;line-height:22px;color:#000}
.price{display:flex;gap:12px}
.price>svg{margin:8.500px 0 0 1px}
.info{width:367px;padding-top:7px;margin-left:-1px}
.info h3{font-size:15px;line-height:18px;color:#111;margin-bottom:2.300px}
.info p{white-space:nowrap}
.info .cfg{margin-top:13.300px}
.tbl{margin-top:12.400px;color:#6c6f73}
.row{display:flex;justify-content:space-between;padding:4px 13.800px 3px 13.300px;border-bottom:1px solid #e3e4e6;white-space:nowrap}
.row+.row+.row{padding-bottom:2.700px}
.row span+span{text-align:right}
.row.th{height:24px;background:#f4f4f4;font-size:10px;font-weight:500}
.est{display:block;margin:18.500px 0 0 10px;font-weight:500;white-space:nowrap;color:#111}
.scroll{width:8px;height:290px;margin:4.500px 1px 0 auto;background:#c1c1c1}
.right{width:40px;border-left:1px solid #e3e4e6;padding:15px 0 0 12px}

/* taskbar */
.taskbar{height:34px;flex:none;background:linear-gradient(90deg,#e2d3d3,#e0d2d5 30%,#e7d7d8 45%,#e5d5d5);display:flex;font-family:"Noto Sans","Open Sans",sans-serif;color:#1c1c1c}
.start{width:41px;display:flex;align-items:center;padding-left:13px}
.tsearch{position:relative;width:238.500px;height:32px;margin-top:1px;background:#fff;display:flex;align-items:center;padding-left:9px;gap:9.500px;font-size:12.3px;color:#3a3a3a}
.tsearch span{margin-top:2px}
.mount{position:absolute;right:0;bottom:0}
.apps-row{display:flex;padding-left:.800px}
.apps-row span{position:relative;width:41.450px;display:flex;align-items:center;justify-content:center}
.apps-row .cur{background:linear-gradient(90deg,#f5eeee 0 38px,#e9dddd 38px);padding-left:2px}
.cur::after,.run::after{content:"";position:absolute;bottom:0;height:2px;background:#0a7ad8}
.cur::after{left:1px;width:39px}
.run::after{left:4px;width:34px}
.run{padding-left:2px}
.kk{font:7px Roboto,sans-serif;fill:#fff}
.ya2{font:700 14px "Liberation Sans",sans-serif;fill:#fff}
.badge45{font:7px Roboto,sans-serif;fill:#fff}
.tray{margin-left:auto;display:flex;align-items:center}
.news{margin-right:17px}
.tray span{width:20.100px;display:flex;justify-content:center}
.lang{font-style:normal;font-size:9.3px;width:20px;margin-left:3px}
.clock{width:66px;text-align:center;font-size:9.1px;line-height:15px}
.note{width:37px;padding:4px 0 0 7px}
.notecount{font-size:10px}
.desk{width:1px;height:34px;background:#bdaeb0;margin-right:3px}
```
